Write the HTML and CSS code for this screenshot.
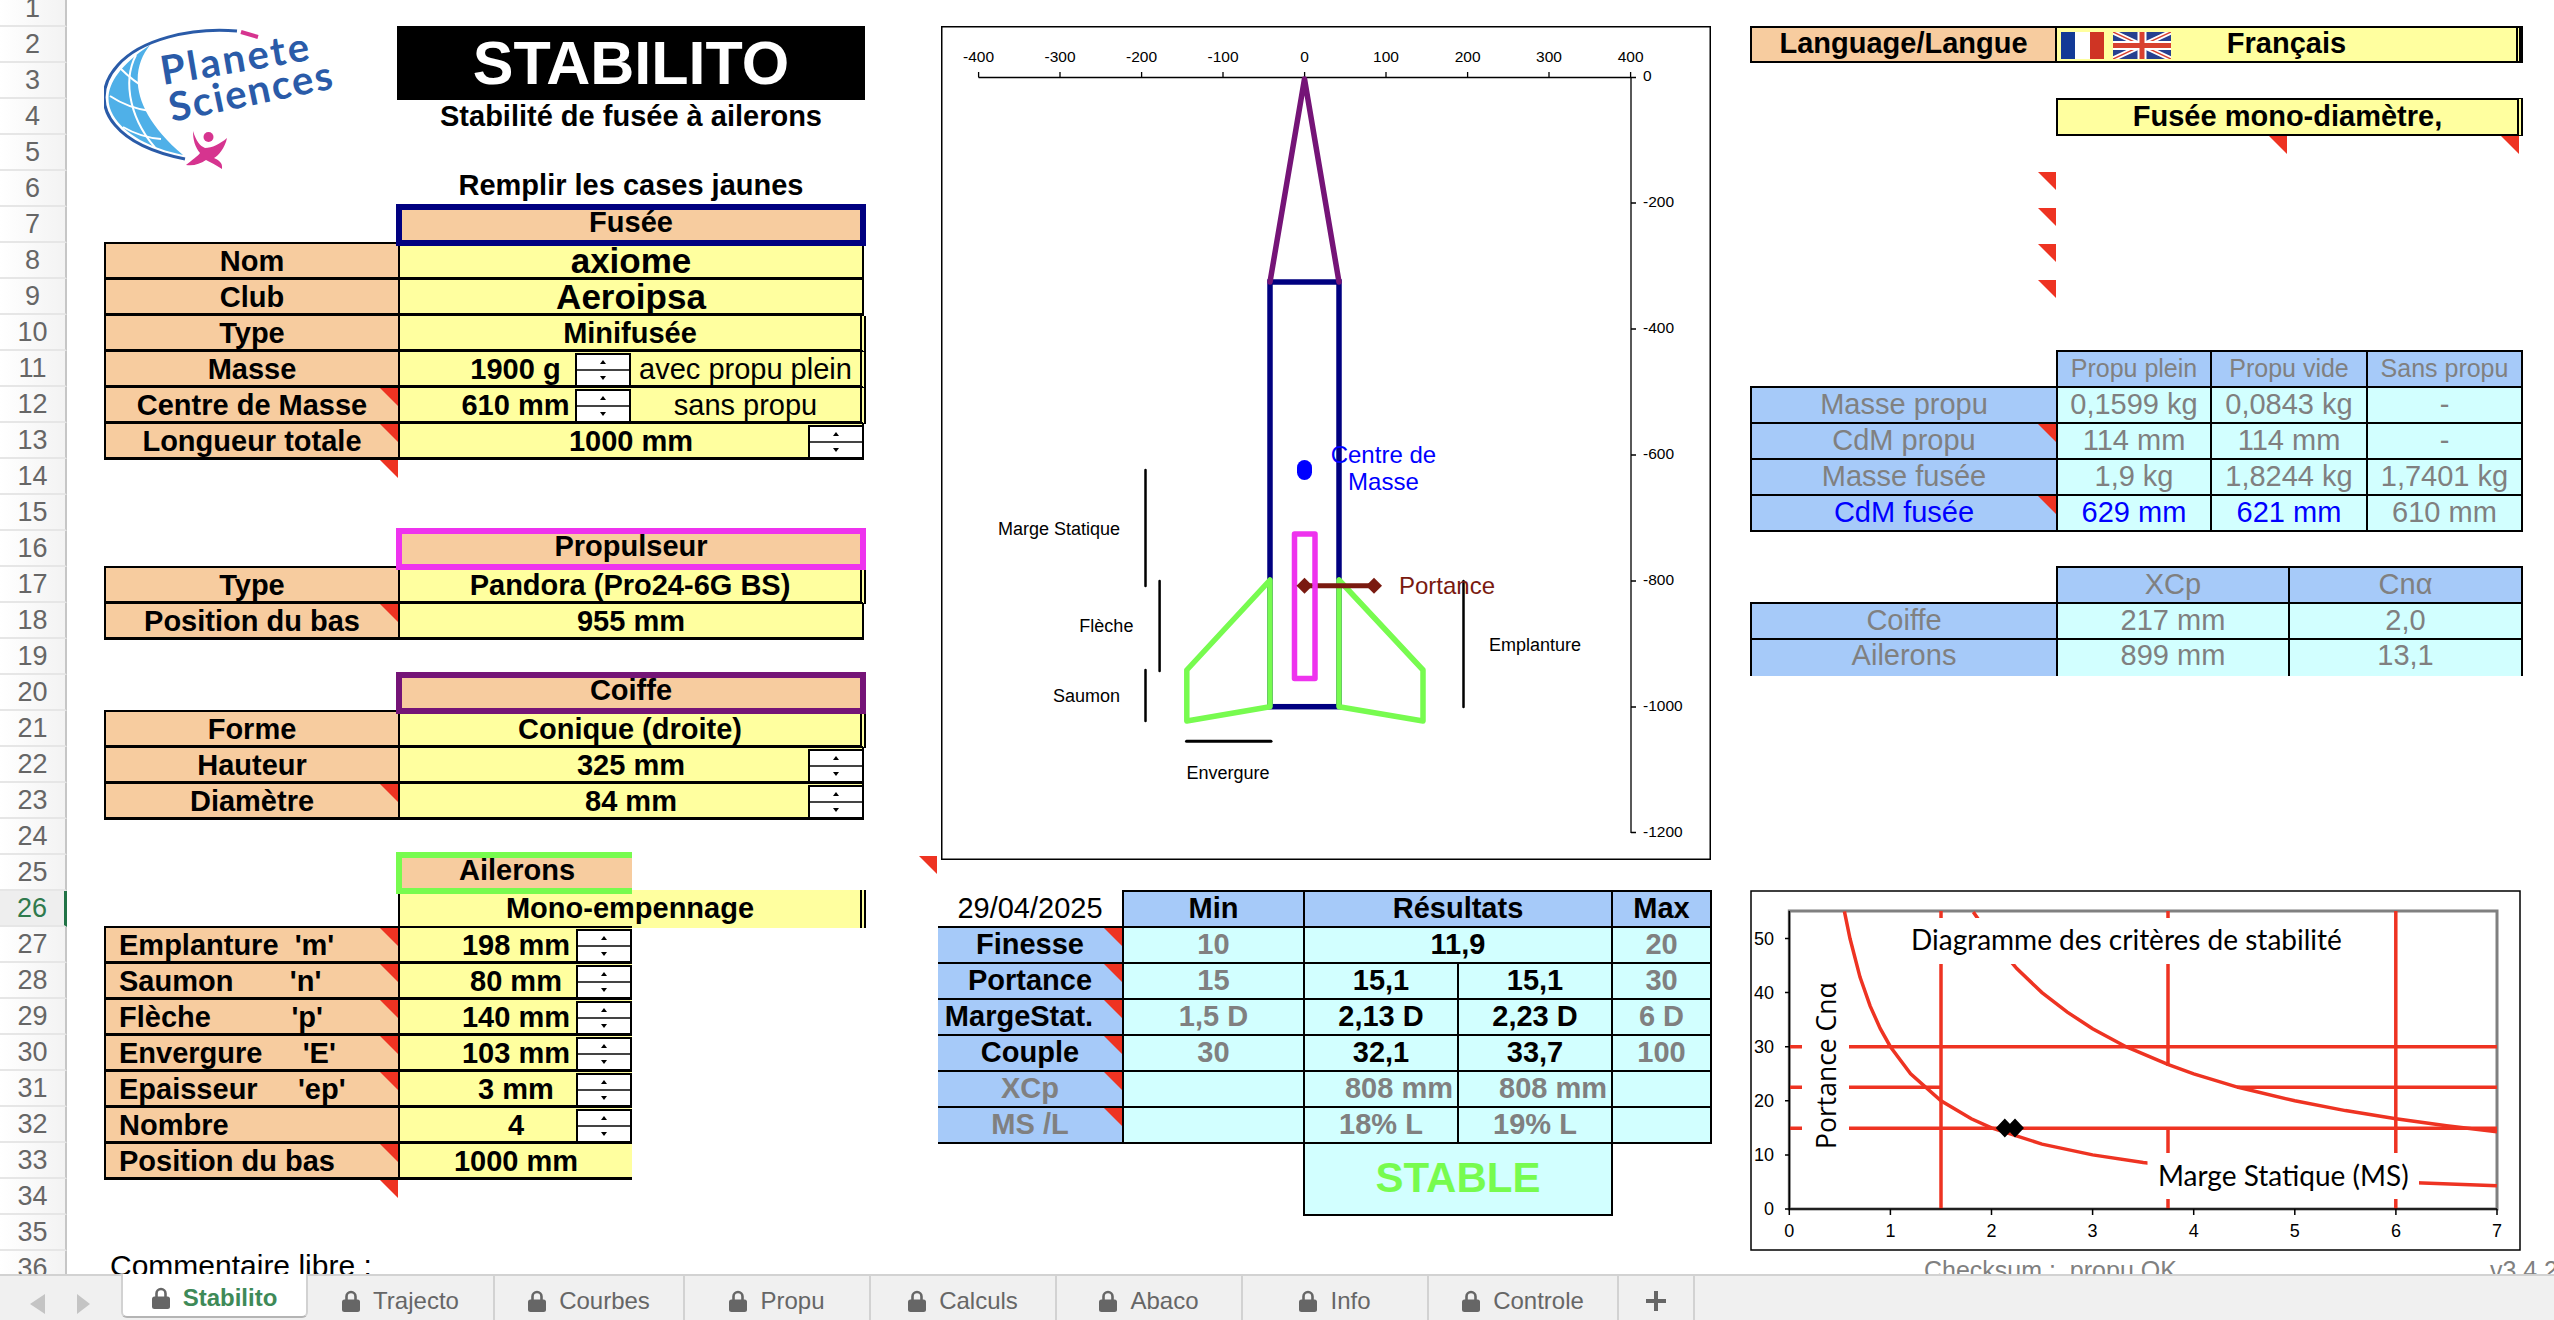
FILE: index.html
```html
<!DOCTYPE html>
<html lang="fr">
<head>
    <meta charset="UTF-8">
    <title>Stabilito</title>
    <link rel="stylesheet" href="styles.css">
</head>
<body>

<div class="sheet">
    <div class="rownums">
        <div>1</div><div>2</div><div>3</div><div>4</div><div>5</div><div>6</div>
        <div>7</div><div>8</div><div>9</div><div>10</div><div>11</div><div>12</div>
        <div>13</div><div>14</div><div>15</div><div>16</div><div>17</div><div>18</div>
        <div>19</div><div>20</div><div>21</div><div>22</div><div>23</div><div>24</div>
        <div>25</div><div class="current">26</div><div>27</div><div>28</div><div>29</div><div>30</div>
        <div>31</div><div>32</div><div>33</div><div>34</div><div>35</div><div>36</div>
    </div>

    <!-- saisie -->
    <div class="col-left">
        <div class="brand">
            <svg class="logo" viewBox="24 16 236 146" width="236" height="146">
                <path d="M70 35C50 60 50 100 103 145C70 138 45 125 33 105C22 85 30 62 70 35Z" fill="#4fb0e8"/>
                <g fill="none" stroke="#fff" stroke-width="2">
                    <path d="M40 58C48 66 56 73 66 78"/>
                    <path d="M30 86C42 94 56 99 70 101"/>
                    <path d="M43 117C55 124 68 128 81 129"/>
                    <path d="M56 45C42 72 50 112 80 143"/>
                </g>
                <path d="M157 21C110 17 60 30 38 55C18 77 22 100 35 115C50 133 75 143 105 149" fill="none" stroke="#2a5ba8" stroke-width="3"/>
                <path d="M161 22L178 27" stroke="#d6348f" stroke-width="4" fill="none"/>
                <text class="logo-text" x="83" y="75" textLength="150" transform="rotate(-9.6 83 75)">Planete</text>
                <text class="logo-text" x="92" y="112" textLength="166" transform="rotate(-11.8 92 112)">Sciences</text>
                <circle cx="128.500" cy="127" r="5" fill="#d6348f"/>
                <path d="M113 121C116 131 120 136 125 138C132 138 140 134 147 128C145 138 138 146 134 148C138 150 143 152 142 159C136 155 130 152 126 150C120 154 114 156 106 155C112 150 118 146 120 143C115 137 113 130 113 121Z" fill="#d6348f"/>
            </svg>
            <div class="title">
                <div class="title-black">STABILITO</div>
                <div class="subtitle">Stabilité de fusée à ailerons</div>
                <div class="fill-hint">Remplir les cases jaunes</div>
            </div>
        </div>

        <div class="sec sec-navy">Fusée</div>
        <div class="tbl">
            <div class="row"><div class="lab">Nom</div><div class="val big">axiome</div></div>
            <div class="row"><div class="lab">Club</div><div class="val big">Aeroipsa</div></div>
            <div class="row"><div class="lab">Type</div><div class="val dbl">Minifusée</div></div>
            <div class="row">
                <div class="lab">Masse</div>
                <div class="val split dbl">
                    <div class="half">1900 g<div class="spin"><i class="up"></i><i class="down"></i></div></div>
                    <div class="half-text">avec propu plein</div>
                </div>
            </div>
            <div class="row">
                <div class="lab">Centre de Masse<span class="tri"></span></div>
                <div class="val split dbl">
                    <div class="half">610 mm<div class="spin"><i class="up"></i><i class="down"></i></div></div>
                    <div class="half-text">sans propu</div>
                </div>
            </div>
            <div class="row">
                <div class="lab">Longueur totale<span class="tri"></span></div>
                <div class="val">1000 mm<div class="spin"><i class="up"></i><i class="down"></i></div></div>
            </div>
        </div>
        <div class="spacer spacer-row14"><span class="tri"></span></div>

        <div class="sec sec-pink">Propulseur</div>
        <div class="tbl">
            <div class="row"><div class="lab">Type</div><div class="val dbl">Pandora (Pro24-6G BS)</div></div>
            <div class="row"><div class="lab">Position du bas<span class="tri"></span></div><div class="val">955 mm</div></div>
        </div>
        <div class="spacer"></div>

        <div class="sec sec-purple">Coiffe</div>
        <div class="tbl">
            <div class="row"><div class="lab">Forme</div><div class="val dbl">Conique (droite)</div></div>
            <div class="row">
                <div class="lab">Hauteur</div>
                <div class="val">325 mm<div class="spin"><i class="up"></i><i class="down"></i></div></div>
            </div>
            <div class="row">
                <div class="lab">Diamètre<span class="tri"></span></div>
                <div class="val">84 mm<div class="spin"><i class="up"></i><i class="down"></i></div></div>
            </div>
        </div>
        <div class="spacer"></div>

        <div class="sec sec-green">Ailerons</div>
        <div class="mono">Mono-empennage</div>
        <div class="tbl tbl-fins">
            <div class="row"><div class="lab lab-left">Emplanture  'm'<span class="tri"></span></div><div class="val">198 mm<div class="spin"><i class="up"></i><i class="down"></i></div></div></div>
            <div class="row"><div class="lab lab-left">Saumon       'n'<span class="tri"></span></div><div class="val">80 mm<div class="spin"><i class="up"></i><i class="down"></i></div></div></div>
            <div class="row"><div class="lab lab-left">Flèche          'p'<span class="tri"></span></div><div class="val">140 mm<div class="spin"><i class="up"></i><i class="down"></i></div></div></div>
            <div class="row"><div class="lab lab-left">Envergure     'E'<span class="tri"></span></div><div class="val">103 mm<div class="spin"><i class="up"></i><i class="down"></i></div></div></div>
            <div class="row"><div class="lab lab-left">Epaisseur     'ep'<span class="tri"></span></div><div class="val">3 mm<div class="spin"><i class="up"></i><i class="down"></i></div></div></div>
            <div class="row"><div class="lab lab-left">Nombre</div><div class="val">4<div class="spin"><i class="up"></i><i class="down"></i></div></div></div>
            <div class="row"><div class="lab lab-left">Position du bas<span class="tri"></span></div><div class="val">1000 mm</div></div>
        </div>
        <div class="spacer spacer-row34"><span class="tri"></span></div>
        <div class="comment">Commentaire libre :</div>
    </div>

    <!-- plan de la fusee + resultats -->
    <div class="col-mid">
        <div class="chart">
            <svg viewBox="942 26 770 834" width="770" height="834">
                <rect x="942.75" y="26.75" width="768.5" height="832.5" fill="#fff" stroke="#000" stroke-width="1.5"/>
                <path d="M979.6 77.500H1632V833M979.6 77.500V72M1061 77.500V72M1142.600 77.500V72M1224 77.500V72M1305.600 77.500V72M1387 77.500V72M1468.600 77.500V72M1550 77.500V72M1631.600 77.500V72M1632 77.500H1637M1632 203H1637M1632 329H1637M1632 455H1637M1632 581H1637M1632 707H1637M1632 832.500H1637" fill="none" stroke="#000" stroke-width="1.300"/>
                <g class="ticks">
                    <text x="979.6" y="62.300" text-anchor="middle">-400</text>
                    <text x="1061" y="62.300" text-anchor="middle">-300</text>
                    <text x="1142.600" y="62.300" text-anchor="middle">-200</text>
                    <text x="1224" y="62.300" text-anchor="middle">-100</text>
                    <text x="1305.600" y="62.300" text-anchor="middle">0</text>
                    <text x="1387" y="62.300" text-anchor="middle">100</text>
                    <text x="1468.600" y="62.300" text-anchor="middle">200</text>
                    <text x="1550" y="62.300" text-anchor="middle">300</text>
                    <text x="1631.600" y="62.300" text-anchor="middle">400</text>
                    <text x="1644" y="81">0</text>
                    <text x="1644" y="207.300">-200</text>
                    <text x="1644" y="333">-400</text>
                    <text x="1644" y="459">-600</text>
                    <text x="1644" y="585">-800</text>
                    <text x="1644" y="711">-1000</text>
                    <text x="1644" y="837">-1200</text>
                </g>
                <rect x="1271" y="282" width="69" height="424.700" fill="none" stroke="#000080" stroke-width="5.500"/>
                <path d="M1271 282L1305.500 79L1340 282" fill="none" stroke="#751477" stroke-width="5.500" stroke-linecap="round" stroke-linejoin="round"/>
                <path d="M1271 580V706.700L1187.800 721V670ZM1340 580V706.700L1424 721V670Z" fill="none" stroke="#77fb4f" stroke-width="5.500" stroke-linejoin="round"/>
                <path d="M1305.500 585.700H1375" stroke="#7a1a10" stroke-width="5"/>
                <rect x="1295.500" y="534" width="20.500" height="144.500" fill="#fff" fill-opacity="0" stroke="#ee33ee" stroke-width="5.500" stroke-linejoin="round"/>
                <path d="M1305.500 577.700L1313.500 585.700L1305.500 593.700L1297.500 585.700ZM1375 577.700L1383 585.700L1375 593.700L1367 585.700Z" fill="#7a1a10"/>
                <rect x="1298" y="460" width="15" height="20" rx="7.500" fill="#0000ff"/>
                <g class="notes" fill="none" stroke="#000" stroke-width="2.500" stroke-linecap="round">
                    <path d="M1146.500 470V586M1160.600 581V671M1146.500 670V721M1464.500 581V707"/>
                    <path d="M1187.500 741.300H1272" stroke-width="3"/>
                </g>
                <g class="labels">
                    <text x="1121" y="534.500" text-anchor="end">Marge Statique</text>
                    <text x="1134.400" y="632" text-anchor="end">Flèche</text>
                    <text x="1121" y="701.500" text-anchor="end">Saumon</text>
                    <text x="1490" y="650.500">Emplanture</text>
                    <text x="1229" y="778.500" text-anchor="middle">Envergure</text>
                </g>
                <g class="cg-labels">
                    <text x="1384.400" y="462.500" text-anchor="middle">Centre de</text>
                    <text x="1384.400" y="490" text-anchor="middle">Masse</text>
                </g>
                <text class="lift-label" x="1400" y="594">Portance</text>
            </svg>
            <span class="tri tri-chart"></span>
        </div>

        <table class="results">
            <colgroup><col class="c-lab"><col class="c-min"><col class="c-res"><col class="c-res"><col class="c-max"></colgroup>
            <tr>
                <td class="date">29/04/2025</td>
                <th>Min</th>
                <th colspan="2">Résultats</th>
                <th>Max</th>
            </tr>
            <tr>
                <th class="side">Finesse<span class="tri"></span></th>
                <td class="dim">10</td>
                <td colspan="2">11,9</td>
                <td class="dim">20</td>
            </tr>
            <tr>
                <th class="side">Portance<span class="tri"></span></th>
                <td class="dim">15</td>
                <td>15,1</td>
                <td>15,1</td>
                <td class="dim">30</td>
            </tr>
            <tr>
                <th class="side side-marge">MargeStat.<span class="tri"></span></th>
                <td class="dim">1,5 D</td>
                <td>2,13 D</td>
                <td>2,23 D</td>
                <td class="dim">6 D</td>
            </tr>
            <tr>
                <th class="side">Couple<span class="tri"></span></th>
                <td class="dim">30</td>
                <td>32,1</td>
                <td>33,7</td>
                <td class="dim">100</td>
            </tr>
            <tr>
                <th class="side dim">XCp<span class="tri"></span></th>
                <td></td>
                <td class="dim to-right">808 mm</td>
                <td class="dim to-right">808 mm</td>
                <td></td>
            </tr>
            <tr>
                <th class="side dim">MS /L<span class="tri"></span></th>
                <td></td>
                <td class="dim">18% L</td>
                <td class="dim">19% L</td>
                <td></td>
            </tr>
            <tr class="stable-row">
                <td class="blank" colspan="2"></td>
                <td class="stable" colspan="2">STABLE</td>
                <td class="blank"></td>
            </tr>
        </table>
    </div>

    <!-- langue, masses, diagramme -->
    <div class="col-right">
        <div class="lang">
            <div class="lang-lab">Language/Langue</div>
            <div class="lang-val">Français
                <div class="flags">
                    <svg viewBox="0 0 43 27" width="43" height="27">
                        <rect width="14" height="27" fill="#133a96"/>
                        <rect x="14" width="15" height="27" fill="#fff"/>
                        <rect x="29" width="14" height="27" fill="#cf3424"/>
                    </svg>
                    <svg viewBox="0 0 58 27" width="58" height="27">
                        <rect width="58" height="27" fill="#26408f"/>
                        <path d="M0 0L58 27M58 0L0 27" stroke="#fff" stroke-width="5"/>
                        <path d="M0 0L58 27M58 0L0 27" stroke="#d8412f" stroke-width="1.500"/>
                        <path d="M29 0V27M0 13.500H58" stroke="#fff" stroke-width="9"/>
                        <path d="M29 0V27M0 13.500H58" stroke="#d8412f" stroke-width="5"/>
                    </svg>
                </div>
            </div>
        </div>
        <div class="rocket-type">
            Fusée mono-diamètre,
            <span class="tri tri-a"></span>
            <span class="tri tri-b"></span>
        </div>
        <div class="tri-stack">
            <span class="tri-plain"></span>
            <span class="tri-plain"></span>
            <span class="tri-plain"></span>
            <span class="tri-plain"></span>
        </div>

        <table class="props">
            <colgroup><col class="p-lab"><col class="p-a"><col class="p-b"><col class="p-c"></colgroup>
            <tr class="small">
                <td class="blank"></td>
                <th>Propu plein</th>
                <th>Propu vide</th>
                <th>Sans propu</th>
            </tr>
            <tr>
                <th>Masse propu</th>
                <td>0,1599 kg</td>
                <td>0,0843 kg</td>
                <td>-</td>
            </tr>
            <tr>
                <th>CdM propu<span class="tri"></span></th>
                <td>114 mm</td>
                <td>114 mm</td>
                <td>-</td>
            </tr>
            <tr>
                <th>Masse fusée</th>
                <td>1,9 kg</td>
                <td>1,8244 kg</td>
                <td>1,7401 kg</td>
            </tr>
            <tr>
                <th class="blue">CdM fusée<span class="tri"></span></th>
                <td class="blue">629 mm</td>
                <td class="blue">621 mm</td>
                <td>610 mm</td>
            </tr>
        </table>

        <table class="props props-cp">
            <colgroup><col class="p-lab"><col class="q-a"><col class="q-b"></colgroup>
            <tr>
                <td class="blank"></td>
                <th>XCp</th>
                <th>Cnα</th>
            </tr>
            <tr>
                <th>Coiffe</th>
                <td>217 mm</td>
                <td>2,0</td>
            </tr>
            <tr class="last">
                <th>Ailerons</th>
                <td>899 mm</td>
                <td>13,1</td>
            </tr>
        </table>

        <svg class="diagram" viewBox="1750 890 771 361" width="771" height="361">
            <rect x="1751" y="891" width="769" height="359" fill="#fff" stroke="#000" stroke-width="1.500"/>
            <rect x="1789.300" y="911" width="707.700" height="298" fill="#fff" stroke="#808080" stroke-width="3"/>
            <g fill="none" stroke="#ee3322" stroke-width="3.500">
                <path d="M1941 911V1209M2168 911V1066M2168 1128V1209M2395.800 911V1209"/>
                <path d="M1789 1046.700H2497M1789 1128.300H2497M1789 1087.300H1941M2237 1087.300H2497"/>
                <polyline points="1844.400,911.400 1850,938.500 1860,977.100 1870.200,1006.100 1880.300,1028.700 1890.400,1046.700 1910.600,1073.800 1941,1100.800 1971.300,1118.800 1991.500,1127.900 2042,1144.100 2092.600,1154.900 2143.200,1162.600 2193.700,1168.400 2294.800,1176.500 2395.900,1182 2497,1185.800"/>
                <polyline points="1973.300,912 1991.500,938.500 2016.800,968.600 2042,992.600 2067.300,1012.100 2092.600,1028.700 2126,1046.700 2168.400,1064.700 2193.700,1073.800 2238.200,1087.300 2294.800,1100.800 2345.400,1110.600 2395.900,1118.800 2446.500,1125.800 2497,1131.700"/>
            </g>
            <rect x="1896" y="918" width="467" height="46" fill="#fff"/>
            <rect x="2147.500" y="1153" width="271.500" height="46" fill="#fff"/>
            <rect x="1802" y="987" width="47" height="162" fill="#fff"/>
            <path d="M1789.300 911V1209H2497M1785 938.500H1789.300M1785 992.600H1789.300M1785 1046.700H1789.300M1785 1100.800H1789.300M1785 1154.900H1789.300M1785 1209H1789.300M1789.300 1209V1215M1890.400 1209V1215M1991.500 1209V1215M2092.600 1209V1215M2193.700 1209V1215M2294.800 1209V1215M2395.900 1209V1215M2497 1209V1215" fill="none" stroke="#000" stroke-width="1.500"/>
            <path d="M2004.800 1118.500L2013.800 1128L2004.800 1137.500L1995.800 1128ZM2015 1118.500L2024 1128L2015 1137.500L2006 1128Z" fill="#000"/>
            <g class="axis">
                <text x="1774" y="944.500" text-anchor="end">50</text>
                <text x="1774" y="998.600" text-anchor="end">40</text>
                <text x="1774" y="1052.700" text-anchor="end">30</text>
                <text x="1774" y="1106.800" text-anchor="end">20</text>
                <text x="1774" y="1160.900" text-anchor="end">10</text>
                <text x="1774" y="1215" text-anchor="end">0</text>
                <text x="1789.300" y="1236.500" text-anchor="middle">0</text>
                <text x="1890.400" y="1236.500" text-anchor="middle">1</text>
                <text x="1991.500" y="1236.500" text-anchor="middle">2</text>
                <text x="2092.600" y="1236.500" text-anchor="middle">3</text>
                <text x="2193.700" y="1236.500" text-anchor="middle">4</text>
                <text x="2294.800" y="1236.500" text-anchor="middle">5</text>
                <text x="2395.900" y="1236.500" text-anchor="middle">6</text>
                <text x="2497" y="1236.500" text-anchor="middle">7</text>
            </g>
            <text class="diagram-title" x="1911" y="950">Diagramme des critères de stabilité</text>
            <text class="diagram-title" x="2158" y="1186">Marge Statique (MS)</text>
            <text class="diagram-y" x="1836" y="1149" transform="rotate(-90 1836 1149)">Portance Cnα</text>
        </svg>

        <div class="foot">
            <span>Checksum :  propu OK</span>
            <span>v3.4.2</span>
        </div>
    </div>
</div>

<div class="tabs">
    <div class="tab-nav">
        <svg viewBox="0 0 60 20" width="60" height="20">
            <path d="M15 0V20L0 10Z" fill="#c4c4c4"/>
            <path d="M47 0V20L60 10Z" fill="#c4c4c4"/>
        </svg>
    </div>
    <div class="tab tab-active"><svg class="lock" viewBox="0 0 18 22" width="18" height="22"><path d="M4.500 10V6.500a4.500 4.500 0 0 1 9 0V10" fill="none" stroke="#666" stroke-width="2.600"/><rect y="9.500" width="18" height="12.500" rx="2.500" fill="#666"/></svg>Stabilito</div>
    <div class="tab tab-first"><svg class="lock" viewBox="0 0 18 22" width="18" height="22"><path d="M4.500 10V6.500a4.500 4.500 0 0 1 9 0V10" fill="none" stroke="#666" stroke-width="2.600"/><rect y="9.500" width="18" height="12.500" rx="2.500" fill="#666"/></svg>Trajecto</div>
    <div class="tab tab-wide"><svg class="lock" viewBox="0 0 18 22" width="18" height="22"><path d="M4.500 10V6.500a4.500 4.500 0 0 1 9 0V10" fill="none" stroke="#666" stroke-width="2.600"/><rect y="9.500" width="18" height="12.500" rx="2.500" fill="#666"/></svg>Courbes</div>
    <div class="tab"><svg class="lock" viewBox="0 0 18 22" width="18" height="22"><path d="M4.500 10V6.500a4.500 4.500 0 0 1 9 0V10" fill="none" stroke="#666" stroke-width="2.600"/><rect y="9.500" width="18" height="12.500" rx="2.500" fill="#666"/></svg>Propu</div>
    <div class="tab"><svg class="lock" viewBox="0 0 18 22" width="18" height="22"><path d="M4.500 10V6.500a4.500 4.500 0 0 1 9 0V10" fill="none" stroke="#666" stroke-width="2.600"/><rect y="9.500" width="18" height="12.500" rx="2.500" fill="#666"/></svg>Calculs</div>
    <div class="tab"><svg class="lock" viewBox="0 0 18 22" width="18" height="22"><path d="M4.500 10V6.500a4.500 4.500 0 0 1 9 0V10" fill="none" stroke="#666" stroke-width="2.600"/><rect y="9.500" width="18" height="12.500" rx="2.500" fill="#666"/></svg>Abaco</div>
    <div class="tab"><svg class="lock" viewBox="0 0 18 22" width="18" height="22"><path d="M4.500 10V6.500a4.500 4.500 0 0 1 9 0V10" fill="none" stroke="#666" stroke-width="2.600"/><rect y="9.500" width="18" height="12.500" rx="2.500" fill="#666"/></svg>Info</div>
    <div class="tab tab-wide"><svg class="lock" viewBox="0 0 18 22" width="18" height="22"><path d="M4.500 10V6.500a4.500 4.500 0 0 1 9 0V10" fill="none" stroke="#666" stroke-width="2.600"/><rect y="9.500" width="18" height="12.500" rx="2.500" fill="#666"/></svg>Controle</div>
    <div class="tab tab-plus"><svg viewBox="0 0 20 20" width="20" height="20"><path d="M10 0V20M0 10H20" stroke="#666" stroke-width="4"/></svg></div>
</div>

</body>
</html>
```

FILE: styles.css
```css
* {
    box-sizing: border-box;
}
body {
    margin: 0;
    width: 2554px;
    height: 1320px;
    overflow: hidden;
    background-color: #ffffff;
    font-family: "Liberation Sans", Arial, sans-serif;
    font-size: 29px;
    color: #000;
}

/* feuille */
.sheet {
    display: flex;
    height: 1274px;
    overflow: hidden;
}
.rownums {
    flex: none;
    width: 67px;
    margin-top: -9px;
}
.rownums div {
    height: 36px;
    width: 67px;
    display: flex;
    align-items: center;
    justify-content: center;
    font-size: 27px;
    color: #666;
    background: linear-gradient(90deg, #ffffff, #f3f3f3);
    border-right: 2px solid #c6c6c6;
    border-bottom: 2px solid #e6e6e6;
}
.rownums .current {
    color: #2f7a4d;
    background: #eeeeee;
    border-right: 3px solid #217346;
}

/* colonne gauche */
.col-left {
    flex: none;
    width: 871px;
    margin-left: 37px;
    padding-top: 26px;
}
.brand {
    display: flex;
    justify-content: space-between;
    width: 761px;
    height: 178px;
}
.logo {
    flex: none;
}
.logo-text {
    font-family: Lato, sans-serif;
    font-weight: 700;
    font-size: 40px;
    fill: #2a5ba8;
}
.title {
    width: 468px;
    text-align: center;
    font-weight: bold;
}
.title-black {
    height: 74px;
    line-height: 74px;
    background-color: #000;
    color: #fff;
    font-size: 61px;
}
.subtitle {
    height: 32px;
    line-height: 32px;
}
.fill-hint {
    margin-top: 36px;
    height: 34px;
    line-height: 34px;
}
.sec {
    position: relative;
    z-index: 1;
    width: 470px;
    height: 42px;
    margin-left: 292px;
    border: 6px solid #000;
    background-color: #f7cc9f;
    font-weight: bold;
    text-align: center;
    line-height: 24px;
}
.sec-navy { border-color: #000080; }
.sec-pink { border-color: #ee33ee; }
.sec-purple { border-color: #751477; }
.sec-green {
    width: 236px;
    border-color: #77fb4f;
    border-right: none;
}
.tbl {
    position: relative;
    margin-top: -4px;
    width: 760px;
    border-top: 2px solid #000;
    border-left: 2px solid #000;
}
.row {
    display: flex;
    height: 36px;
}
.lab {
    position: relative;
    flex: none;
    width: 294px;
    background-color: #f7cc9f;
    border-right: 2px solid #000;
    border-bottom: 3px solid #000;
    font-weight: bold;
    text-align: center;
    line-height: 34px;
}
.lab-left {
    text-align: left;
    padding-left: 13px;
    white-space: pre;
}
.val {
    position: relative;
    flex: none;
    width: 464px;
    background-color: #ffff9f;
    border-right: 2px solid #000;
    border-bottom: 3px solid #000;
    font-weight: bold;
    text-align: center;
    line-height: 34px;
}
.big {
    font-size: 35px;
}
.dbl {
    width: 466px;
    border-right: 6px double #000;
}
.split {
    display: flex;
}
.half {
    position: relative;
    flex: none;
    width: 231px;
}
.half-text {
    flex: 1;
    font-weight: normal;
}
.spin {
    position: absolute;
    top: 1px;
    right: -2px;
    bottom: 0;
    width: 56px;
    display: flex;
    flex-direction: column;
    background-color: #fff;
    border: 2px solid #000;
    border-bottom: none;
}
.half .spin {
    right: 0;
}
.spin i {
    flex: 1;
    display: flex;
    align-items: center;
    justify-content: center;
}
.spin .up {
    border-bottom: 2px solid #444;
}
.up::after {
    content: "";
    border-left: 3px solid transparent;
    border-right: 3px solid transparent;
    border-bottom: 4px solid #000;
}
.down::after {
    content: "";
    border-left: 3px solid transparent;
    border-right: 3px solid transparent;
    border-top: 4px solid #000;
}
.tbl-fins {
    margin-top: -2px;
    width: 528px;
}
.tbl-fins .val {
    width: 232px;
    border-right: none;
}
.tbl-fins .spin {
    right: 0;
}
.mono {
    width: 468px;
    height: 38px;
    margin-left: 294px;
    margin-top: -4px;
    background-color: #ffff9f;
    border-left: 2px solid #000;
    border-right: 6px double #000;
    font-weight: bold;
    text-align: center;
    line-height: 36px;
}
.spacer {
    position: relative;
    height: 32px;
}
.spacer-row14 {
    height: 68px;
}
.spacer-row14 .tri,
.spacer-row34 .tri {
    right: auto;
    left: 276px;
}
.spacer-row34 {
    height: 68px;
}
.comment {
    height: 36px;
    padding-left: 6px;
    line-height: 36px;
    font-size: 30px;
}

/* triangles de commentaire */
.tri {
    position: absolute;
    top: 0;
    right: 0;
    width: 18px;
    height: 18px;
    background-color: #ee3322;
    clip-path: polygon(0 0, 100% 0, 100% 100%);
}
.tri-plain {
    width: 18px;
    height: 18px;
    background-color: #ee3322;
    clip-path: polygon(0 0, 100% 0, 100% 100%);
}

/* colonne du milieu */
.col-mid {
    flex: none;
    width: 813px;
    margin-left: -38px;
    padding-top: 26px;
}
.chart {
    position: relative;
    width: 770px;
    height: 834px;
    margin-left: 4px;
}
.chart svg {
    display: block;
}
.chart text {
    font-family: "Liberation Sans", Arial, sans-serif;
}
.ticks text {
    font-size: 15.500px;
}
.labels text {
    font-size: 18px;
}
.cg-labels text {
    font-size: 24px;
    fill: #0000ff;
}
.lift-label {
    font-size: 24px;
    fill: #7a1a10;
}
.tri-chart {
    top: auto;
    right: auto;
    left: -22px;
    bottom: -14px;
}
table {
    border-collapse: collapse;
    table-layout: fixed;
}
.results {
    width: 773px;
    margin-top: 30px;
    margin-left: 1px;
}
.c-lab { width: 185px; }
.c-min { width: 181px; }
.c-res { width: 154px; }
.c-max { width: 99px; }
.results td,
.results th {
    position: relative;
    height: 36px;
    padding: 0 0 2px;
    border: 2px solid #000;
    background-color: #d2ffff;
    font-weight: bold;
    text-align: center;
    line-height: 30px;
}
.results th {
    background-color: #a6caf9;
}
.results .dim {
    color: #808080;
}
.results .date {
    border-top: none;
    border-left: none;
    background-color: #fff;
    font-weight: normal;
}
.results .side {
    border-left: none;
}
.results .side-marge {
    padding-right: 22px;
}
.results .to-right {
    text-align: right;
    padding-right: 4px;
}
.results .blank {
    background-color: #fff;
    border: none;
    border-top: 2px solid #000;
}
.stable-row td {
    height: 72px;
}
.results .stable {
    font-size: 42px;
    color: #77fb4f;
}

/* colonne droite */
.col-right {
    flex: none;
    width: 804px;
    margin-left: 0;
    padding-top: 26px;
}
.lang {
    display: flex;
    width: 773px;
    height: 37px;
    border: 2px solid #000;
    font-weight: bold;
    text-align: center;
    line-height: 31px;
}
.lang-lab {
    width: 305px;
    background-color: #f7cc9f;
    border-right: 2px solid #000;
}
.lang-val {
    position: relative;
    flex: 1;
    background-color: #ffff9f;
    border-right: 5px double #000;
}
.flags {
    position: absolute;
    left: 4px;
    top: 4px;
    display: flex;
    gap: 9px;
}
.rocket-type {
    position: relative;
    width: 467px;
    height: 38px;
    margin-top: 35px;
    margin-left: 306px;
    background-color: #ffff9f;
    border: 2px solid #000;
    border-right: 6px double #000;
    font-weight: bold;
    text-align: center;
    line-height: 32px;
}
.rocket-type .tri {
    top: 36px;
}
.rocket-type .tri-a {
    right: auto;
    left: 211px;
}
.rocket-type .tri-b {
    right: auto;
    left: 443px;
}
.tri-stack {
    display: flex;
    flex-direction: column;
    gap: 18px;
    margin-top: 36px;
    margin-left: 288px;
    width: 18px;
}
.props {
    width: 771px;
    margin-top: 52px;
}
.p-lab { width: 306px; }
.p-a { width: 154px; }
.p-b { width: 156px; }
.p-c { width: 155px; }
.q-a { width: 232px; }
.q-b { width: 233px; }
.props td,
.props th {
    position: relative;
    height: 36px;
    padding: 0 0 3px;
    border: 2px solid #000;
    background-color: #d2ffff;
    color: #808080;
    font-weight: normal;
    text-align: center;
    line-height: 30px;
}
.props th {
    background-color: #a6caf9;
}
.props .blank {
    background-color: #fff;
    border-top: none;
    border-left: none;
}
.props .small th {
    font-size: 25px;
}
.props .blue {
    color: #0000ff;
}
.props-cp {
    margin-top: 34px;
}
.props .last th,
.props .last td {
    border-bottom: none;
    padding-bottom: 6px;
}
.diagram {
    display: block;
    margin-top: 214px;
}
.diagram text {
    font-family: "Liberation Sans", Arial, sans-serif;
}
.axis text {
    font-size: 18px;
}
.diagram .diagram-title {
    font-family: Lato, sans-serif;
    font-size: 28px;
}
.diagram .diagram-y {
    font-family: "Open Sans", sans-serif;
    font-size: 26.500px;
}
.foot {
    display: flex;
    justify-content: space-between;
    width: 808px;
    margin-top: 5px;
    padding-left: 174px;
    line-height: 28px;
    font-size: 25px;
    color: #808080;
    white-space: pre;
}

/* onglets */
.tabs {
    display: flex;
    height: 46px;
    background-color: #f0f0f0;
    border-top: 2px solid #d2d2d2;
    font-size: 24px;
    color: #666;
}
.tab-nav {
    flex: none;
    width: 121px;
    padding: 16px 0 0 30px;
}
.tab {
    flex: none;
    display: flex;
    align-items: center;
    justify-content: center;
    gap: 13px;
    width: 186px;
    padding-top: 5px;
    border-right: 2px solid #d2d2d2;
}
.tab-wide {
    width: 190px;
}
.tab-first {
    width: 187px;
}
.tab-active {
    width: 187px;
    height: 44px;
    margin-top: -2px;
    background-color: #fff;
    color: #3e8a58;
    font-weight: bold;
    border: 2px solid #d2d2d2;
    border-top: none;
    border-bottom-color: #b4b4b4;
    border-radius: 0 0 6px 6px;
}
.tab-plus {
    width: 76px;
}
```
